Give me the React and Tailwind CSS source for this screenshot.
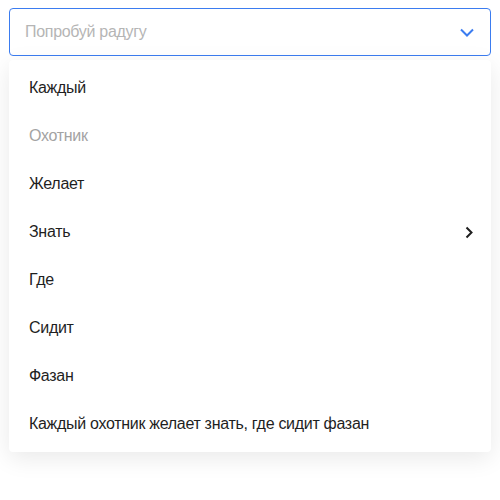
export default function App() {
  const items = [
    { label: "Каждый" },
    { label: "Охотник", disabled: true },
    { label: "Желает" },
    { label: "Знать", sub: true },
    { label: "Где" },
    { label: "Сидит" },
    { label: "Фазан" },
    { label: "Каждый охотник желает знать, где сидит фазан" },
  ];
  return (
    <div className="w-[500px] h-[500px] bg-white px-[9px] pt-[8px] font-['Liberation_Sans',Arial,sans-serif] tracking-[-0.3px]">
      <div className="h-[48px] border border-[#3b7cf0] rounded-[4px] flex items-center pl-[15px] pr-[16px]">
        <span className="flex-1 text-[16px] text-[#b5b5b5]">Попробуй радугу</span>
        <svg width="14" height="9" viewBox="0 0 14 9" fill="none">
          <path d="M1 1.5 L7 7.5 L13 1.5" stroke="#3b7cf0" strokeWidth="2" />
        </svg>
      </div>
      <div className="mt-[4px] py-[4px] bg-white rounded-[4px] shadow-[0_6px_24px_rgba(0,0,0,0.09)]">
        {items.map((it) => (
          <div
            key={it.label}
            className={`h-[48px] flex items-center pl-[20px] pr-[18px] text-[16px] ${
              it.disabled ? "text-[#a3a3a3]" : "text-[#1f1f1f]"
            }`}
          >
            <span className="flex-1">{it.label}</span>
            {it.sub && (
              <svg width="8" height="13" viewBox="0 0 8 13" fill="none">
                <path d="M1.5 1.5 L6.5 6.5 L1.5 11.5" stroke="#1f1f1f" strokeWidth="2" />
              </svg>
            )}
          </div>
        ))}
      </div>
    </div>
  );
}
